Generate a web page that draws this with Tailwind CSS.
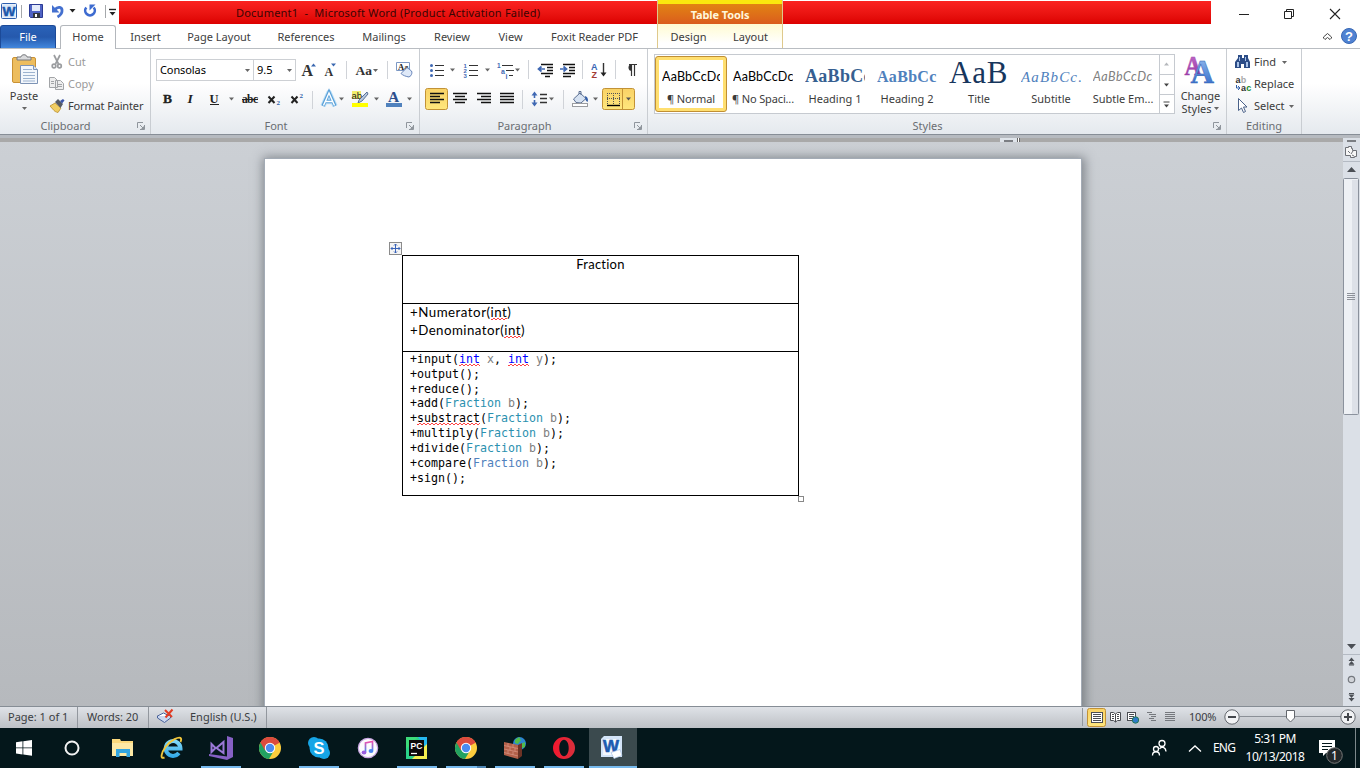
<!DOCTYPE html>
<html lang="en">
<head>
<meta charset="utf-8">
<title>Document1 - Microsoft Word</title>
<script src="https://cdn.jsdelivr.net/npm/@tailwindcss/browser@4"></script>
</head>
<body class="w-[1360px] h-[768px] overflow-hidden flex flex-col bg-white text-[11px] leading-[14px] text-[#3b3b3b] font-['Noto_Sans','Open_Sans',sans-serif] whitespace-nowrap">

<!-- shared symbols -->
<svg class="w-0 h-0 absolute">
  <defs>
    <symbol id="dd" viewBox="0 0 5 3"><path d="M0 0h5L2.500 3z" fill="#666"/></symbol>
    <symbol id="launch" viewBox="0 0 8 8"><path d="M.5 6V.5H6" fill="none" stroke="#8f959c"/><path d="M3 3l3 3M7.500 3v4.500H3" fill="none" stroke="#8f959c"/><path d="M7 4v3H4z" fill="#8f959c"/></symbol>
    <symbol id="chrome" viewBox="0 0 22 22"><circle cx="11" cy="11" r="11" fill="#fccd3d"/><path d="M11 11L1.500 5.500A11 11 0 0 1 20.500 5.700z" fill="#dc4b3e"/><path d="M1.500 5.500A11 11 0 0 0 10 22l5-8.500L11 11z" fill="#22a261"/><path d="M1.500 5.500L6 13.500 11 6H20.700A11 11 0 0 0 1.500 5.500z" fill="#dc4b3e"/><circle cx="11" cy="11" r="5.200" fill="#fff"/><circle cx="11" cy="11" r="4.200" fill="#4b8bf0"/></symbol>
    <linearGradient id="blueA" x1="0" y1="0" x2="0" y2="1"><stop offset="0" stop-color="#9cc4f4"/><stop offset="1" stop-color="#2a62c4"/></linearGradient>
    <linearGradient id="purA" x1="0" y1="0" x2="0" y2="1"><stop offset="0" stop-color="#c873cf"/><stop offset="1" stop-color="#8d2c9c"/></linearGradient>
    <linearGradient id="gold" x1="0" y1="0" x2="0" y2="1"><stop offset="0" stop-color="#f9d266"/><stop offset="1" stop-color="#ffe77d"/></linearGradient>
    <linearGradient id="sky" gradientUnits="userSpaceOnUse" x1="0" y1="738" x2="0" y2="758"><stop offset="0" stop-color="#8fe1fb"/><stop offset="1" stop-color="#2fa6e6"/></linearGradient>
    <linearGradient id="note" x1="0" y1="0" x2="0" y2="1"><stop offset="0" stop-color="#ee4fae"/><stop offset="1" stop-color="#3f8ef2"/></linearGradient>
    <linearGradient id="op" x1="0" y1="0" x2="1" y2="0"><stop offset="0" stop-color="#f4172e"/><stop offset="1" stop-color="#d8303c"/></linearGradient>
  </defs>
</svg>

<!-- title bar and tab strip -->
<header class="flex h-[48px] shrink-0">
  <div class="w-[657px] shrink-0">
    <div class="h-6 flex">
      <svg class="w-[119px] h-6" viewBox="0 0 119 24">
        <rect x="1.500" y="3.500" width="15" height="15" rx="1" fill="#e8f0fb" stroke="#2d5fae"/><rect x="3" y="5" width="12" height="12" fill="#d8e7f8"/>
        <text x="2.500" y="16" font-family="Liberation Sans" font-weight="bold" font-size="13" textLength="13" lengthAdjust="spacingAndGlyphs" fill="#1c58ac" stroke="#1c58ac" stroke-width=".5">W</text>
        <path d="M21.500 5v13" stroke="#a5a8ab"/>
        <path d="M29.500 4.500h13v13h-12l-1-1z" fill="#4f63c4" stroke="#2b3a94"/><rect x="32" y="5" width="8" height="6" fill="#e4ebfa"/><rect x="33" y="13" width="7" height="5" fill="#31363f"/><rect x="35" y="14" width="2" height="3" fill="#fff"/>
        <path d="M55 9.500c3-3.500 7.500-2.500 7 1.500 0 2.500-2 4.500-4.500 6" fill="none" stroke="#4470cf" stroke-width="2.800"/><path d="M52 5v7.500h7.500z" fill="#4470cf"/>
        <path d="M69.500 9h6l-3 3.500z" fill="#222"/>
        <path d="M86.300 7.500a4.800 4.800 0 1 0 7.400 0" fill="none" stroke="#3d6bd0" stroke-width="2.600"/><path d="M89.500 4.500h6l-6 6z" fill="#3d6bd0"/>
        <path d="M105.500 5v13" stroke="#a5a8ab"/>
        <path d="M109 9.500h7" stroke="#222" stroke-width="1.400"/><path d="M109.500 12h6l-3 3.500z" fill="#222"/>
      </svg>
      <div class="mt-px h-[23px] w-[538px] bg-linear-to-b from-[#fb2320] to-[#dc0000] pl-[117px] pt-[5px] text-[#3a0503] text-[11px] tracking-[0.22px]"><span class="whitespace-pre">Document1  -  Microsoft Word (Product Activation Failed)</span></div>
    </div>
    <nav class="flex h-6 items-end text-center leading-[22px] text-[#404040]">
      <div class="w-14 h-[23px] rounded-t-[3px] border border-b-0 border-[#1c4a98] bg-linear-to-b from-[#2a62b8] via-[#2559ad] to-[#4287dd] text-white leading-[22px]">File</div>
      <div class="ml-1 w-[56px] h-[24px] -mb-px rounded-t-[3px] border border-b-0 border-[#b3b7bc] bg-white leading-[22px] relative z-10">Home</div>
      <div class="w-[59px]">Insert</div>
      <div class="w-[88px]">Page Layout</div>
      <div class="w-[86px]">References</div>
      <div class="w-[70px]">Mailings</div>
      <div class="w-[66px]">Review</div>
      <div class="w-[51px]">View</div>
      <div class="w-[117px] tracking-[-0.05px]">Foxit Reader PDF</div>
    </nav>
  </div>
  <div class="w-[126px] shrink-0 border-x border-[#dfc98c]">
    <div class="h-1 bg-[#fbe80e]"></div>
    <div class="h-5 bg-linear-to-b from-[#e28312] to-[#da5c1c] text-center text-[11px] leading-[22px] font-bold text-[#fff6da] tracking-[-0.1px]">Table Tools</div>
    <div class="h-6 flex bg-linear-to-b from-[#fffbd0] to-white to-80% text-center leading-[26px]">
      <div class="w-[62px]">Design</div><div class="w-[64px]">Layout</div>
    </div>
  </div>
  <div class="flex-1">
    <div class="h-6 flex">
      <div class="mt-px h-[23px] w-[428px] bg-linear-to-b from-[#fb2320] to-[#dc0000]"></div>
      <svg class="w-[149px] h-6" viewBox="1211 0 149 24" fill="none" stroke="#222">
        <path d="M1239 14.500h10"/><path d="M1284.500 11.500h7v7h-7zM1286.500 11.500v-2h7v7h-2"/><path d="M1330 9l10 10M1340 9l-10 10" stroke-width="1.100"/>
      </svg>
    </div>
    <svg class="ml-auto w-[50px] h-6" viewBox="1310 24 50 24">
      <path d="M1323.500 37l4-3.500 4 3.500v1l-1.500 1.500-2.500-2-2.500 2-1.500-1.500z" fill="none" stroke="#444"/>
      <circle cx="1349" cy="36" r="7.500" fill="#4f82d2" stroke="#3767b4"/>
      <text x="1349" y="41" text-anchor="middle" font-family="Liberation Sans" font-weight="bold" font-size="13" fill="#fff">?</text>
    </svg>
  </div>
</header>

<!-- ribbon -->
<section class="h-[87px] shrink-0 flex border-t border-[#b9bdc2] border-b-[1px] border-b-[#878e97] bg-linear-to-b from-white from-40% to-[#e5e9ee]">
  <!-- clipboard -->
  <div class="w-[151px] border-r border-[#c9cdd2] flex flex-col">
    <div class="flex h-[68px]">
      <div class="w-[48px] flex flex-col items-center">
        <svg class="w-[48px] h-[40px] shrink-0" viewBox="0 49 48 40">
          <rect x="12.500" y="57.500" width="23" height="25" rx="1.500" fill="#edbd5e" stroke="#c99134"/><path d="M17 60v-3h4c0-3 6-3 6 0h4v3z" fill="#d9dadc" stroke="#77797c"/>
          <path d="M20.500 65.500h13l4 4v14h-17z" fill="#f3f7fc" stroke="#7d93b5"/><path d="M23 69.500h9M23 72.500h12M23 75.500h12M23 78.500h12M23 81h12" stroke="#9db3cf"/><path d="M33.500 65.500v4h4" fill="#dbe6f3" stroke="#7d93b5"/>
        </svg>
        <span class="text-[11px] leading-[14px]">Paste</span>
        <svg class="w-[5px] h-[3px] mt-[4px]"><use href="#dd"/></svg>
      </div>
      <div class="pt-[2px]">
        <div class="flex h-[22px] items-center text-[#9a9a9a]">
          <svg class="w-5 h-[22px]" viewBox="48 51 20 22" fill="none" stroke="#9b9da0" stroke-width="1.700"><path d="M54 55l4.500 9M60 55l-4.500 9"/><circle cx="54" cy="66" r="1.800"/><circle cx="59.500" cy="66" r="1.800"/></svg>Cut
        </div>
        <div class="flex h-[22px] items-center text-[#9a9a9a]">
          <svg class="w-5 h-[22px]" viewBox="48 73 20 22" fill="#eee" stroke="#a2a4a7"><path d="M49.500 77.500h5l3 3v7h-8zM55.500 80.500h5l3 3v6h-8z"/><path d="M51 81.500h3M51 83.500h3M57 84.500h5M57 86.500h5"/></svg>Copy
        </div>
        <div class="flex h-[22px] items-center tracking-[-0.15px]">
          <svg class="w-5 h-[22px]" viewBox="48 95 20 22"><path d="M50 106l5-3 6 5-3 4.500c-2-.5-3-1-4-2z" fill="#f0cd63" stroke="#b98d2c" stroke-width=".8"/><path d="M55 102l3-3 5 5-2.500 4z" fill="#555a66"/><path d="M60 101l3-2 1.500 1.500-2.500 3z" fill="#3b54a8"/></svg>Format Painter
        </div>
      </div>
    </div>
    <div class="flex h-[17px] items-center pr-[5px] text-[#6a6d72]"><span class="flex-1 text-center pr-[6px]">Clipboard</span><svg class="w-2 h-2"><use href="#launch"/></svg></div>
  </div>
  <!-- font -->
  <div class="w-[269px] border-r border-[#c9cdd2] flex flex-col">
    <div class="h-[68px] pl-[5px] pt-[8px]">
      <div class="flex h-[26px] items-center">
        <div class="w-[98px] h-[22px] border border-[#cdd0d4] bg-white flex items-center justify-between px-[3px] text-black tracking-[-0.1px]"><span>Consolas</span><svg class="w-[5px] h-[3px]"><use href="#dd"/></svg></div>
        <div class="w-[43px] h-[22px] -ml-px border border-[#cdd0d4] bg-white flex items-center justify-between px-[3px] text-black"><span>9.5</span><svg class="w-[5px] h-[3px]"><use href="#dd"/></svg></div>
        <svg class="w-[122px] h-[26px]" viewBox="296 57 122 26" font-family="Liberation Serif" font-weight="bold" fill="#333">
          <text x="301.500" y="76" font-size="16">A</text><path d="M311 66.500l2.500-3 2.500 3z" fill="#3a68b0"/>
          <text x="324.500" y="76" font-size="12">A</text><path d="M331 63.500h5l-2.500 3z" fill="#3a68b0"/>
          <path d="M346.500 61v18M387.500 61v18" stroke="#d0d3d8"/>
          <text x="355.500" y="75" font-size="13.500">Aa</text><path d="M373 69h5l-2.500 3z" fill="#666"/>
          <path d="M396.500 62.500h13v8h-13z" fill="#fff" stroke="#7c98c4"/><text x="398" y="70" font-size="8.500" fill="#222">Aa</text>
          <path d="M401 73.500l6-6 4.500 3.500c.8 1.500.3 3-.5 4.500l-2 1.500c-3-.5-6-1.500-8-3.500z" fill="#dfe9f8" stroke="#6785ba"/>
        </svg>
      </div>
      <svg class="w-[263px] h-[30px]" viewBox="156 83 263 30" font-family="Liberation Serif" fill="#222">
        <text x="163" y="103" font-weight="bold" font-size="13.500" stroke="#222" stroke-width=".3">B</text>
        <text x="187.500" y="103" font-style="italic" font-weight="bold" font-size="13.500">I</text>
        <text x="209.500" y="103" font-weight="bold" font-size="12.500">U</text><path d="M210 104.500h9" stroke="#222"/>
        <path d="M229 97.500h5l-2.500 3z" fill="#666"/>
        <text x="242" y="103" font-weight="bold" font-size="11.500" textLength="16">abc</text><path d="M242 99.500h16" stroke="#222"/>
        <path d="M268.500 96.500l6 6.500M274.500 96.500l-6 6.500" stroke="#222" stroke-width="2"/><text x="276.500" y="105" font-size="7" font-weight="bold" fill="#2f5ea8">2</text>
        <path d="M291.500 96.500l6 6.500M297.500 96.500l-6 6.500" stroke="#222" stroke-width="2"/><text x="299.500" y="98" font-size="7" font-weight="bold" fill="#2f5ea8">2</text>
        <path d="M312.500 91v18" stroke="#d0d3d8"/>
        <path d="M323 106l6-13.500 6 13.500M325.500 101.500h7" fill="none" stroke="#bfe1f8" stroke-width="5.500" stroke-linejoin="round"/><path d="M323 106l6-13.500 6 13.500M325.500 101.500h7" fill="none" stroke="#5aa0d8" stroke-width="3.400"/><path d="M323.500 105.500l5.500-12.500 5.500 12.500M325.500 101.500h7" fill="none" stroke="#fff" stroke-width="1.400"/>
        <path d="M339 97.500h5l-2.500 3zM374 97.500h5l-2.500 3zM407 97.500h5l-2.500 3z" fill="#666"/>
        <path d="M352 91h9v8h-9z" fill="#f3ee6b"/><text x="351.500" y="98.500" font-family="Liberation Sans" font-size="9.500">ab</text><path d="M367 92l-8 8-1 3 4-2 6-7z" fill="#b8c7dd" stroke="#4a658f" stroke-width=".9"/><path d="M352 103h16v4h-16z" fill="#ff0"/>
        <text x="388" y="101.500" font-weight="bold" font-size="15.500" fill="#2c4e8c">A</text><path d="M386 103h16v4h-16z" fill="#4f81bd"/>
      </svg>
    </div>
    <div class="flex h-[17px] items-center pr-[5px] text-[#6a6d72]"><span class="flex-1 text-center pr-[5px]">Font</span><svg class="w-2 h-2"><use href="#launch"/></svg></div>
  </div>
  <!-- paragraph -->
  <div class="w-[228px] border-r border-[#c9cdd2] flex flex-col">
    <svg class="w-[227px] h-[68px]" viewBox="420 49 227 68" fill="none" stroke="#333" font-family="Liberation Sans">
      <path d="M435 65.500h9M435 70.500h9M435 75.500h9M469 65.500h9M469 70.500h9M469 75.500h9" stroke-width="1.200"/>
      <g fill="#3f68b3" stroke="none"><circle cx="431.500" cy="65.500" r="1.500"/><circle cx="431.500" cy="70.500" r="1.500"/><circle cx="431.500" cy="75.500" r="1.500"/>
        <text x="463.500" y="67.500" font-size="6" font-weight="bold">1</text><text x="463.500" y="72.800" font-size="6" font-weight="bold">2</text><text x="463.500" y="78" font-size="6" font-weight="bold">3</text>
        <text x="497" y="68" font-size="6.500" font-weight="bold">1</text><text x="501" y="73.500" font-size="7" font-weight="bold">a</text><text x="505.500" y="78.500" font-size="7" font-weight="bold">i</text></g>
      <path d="M502 65.500h11M506 70.500h8M509 75.500h4" stroke-width="1.200"/>
      <g fill="#666" stroke="none"><path d="M450 68.500h5l-2.500 3zM485 68.500h5l-2.500 3zM515 68.500h5l-2.500 3zM549 97.500h5l-2.500 3zM593 97.500h5l-2.500 3z"/></g>
      <path d="M528.500 60v19M582.500 60v19M615.500 60v19M522.500 90v19M563.500 90v19" stroke="#d0d3d8"/>
      <path d="M541 64.500h12M547 67.500h6M547 70.500h6M541 73.500h12M545 76.500h5M563 64.500h12M569 67.500h6M569 70.500h6M563 73.500h12M563 76.500h8" stroke="#111" stroke-width="1.300"/>
      <path d="M545 69h-6m2.500-2.500l-3 2.500 3 2.500M560 69h6m-2.500-2.500l3 2.500-3 2.500" stroke="#3f68b3" stroke-width="1.700"/>
      <g stroke="none" font-weight="bold"><text x="591" y="69.500" font-size="9" fill="#3866b4">A</text><text x="591.500" y="78" font-size="9" fill="#a33b34">Z</text></g>
      <path d="M603.500 63v11" stroke-width="1.400"/><path d="M600.500 72.500h6l-3 4z" fill="#222" stroke="none"/>
      <path d="M631.500 64v12M634.500 64v12M629 64.500h8" stroke-width="1.200"/><path d="M632 64a3.500 3.500 0 0 0 0 7z" fill="#333" stroke="none"/>
      <rect x="425.500" y="88.500" width="22" height="21" rx="2" fill="url(#gold)" stroke="#c29236"/>
      <path d="M430 93.500h14M430 96.500h10M430 99.500h14M430 102.500h10M453 93.500h14M455 96.500h10M453 99.500h14M455 102.500h10M477 93.500h14M481 96.500h10M477 99.500h14M481 102.500h10M500 93.500h14M500 96.500h14M500 99.500h14M500 102.500h14" stroke="#111" stroke-width="1.300"/>
      <path d="M534.500 94v4M534.500 100v5" stroke="#3f68b3" stroke-width="1.600"/><path d="M531.500 95.500h6l-3-4zM531.500 102.500h6l-3 4z" fill="#3f68b3" stroke="none"/>
      <path d="M540 94.500h7M540 98.500h7M540 102.500h7" stroke-width="1.300"/>
      <path d="M573.500 99l6.500-6 6 5.500-5 4.500-5-.5z" fill="#d6e2f2" stroke="#5b6f91"/><path d="M579 94v-2.500h2V95" stroke="#5b6f91"/><path d="M585 96c3 1 3.500 4 2.500 6-2-1-2.500-3-2.500-6z" fill="#355fa8" stroke="none"/><rect x="572.500" y="103.500" width="15" height="3" fill="#fff" stroke="#9a9ca0"/>
      <rect x="602.500" y="88.500" width="32" height="21" rx="2" fill="url(#gold)" stroke="#c29236"/><path d="M622.500 89v20" stroke="#c29236"/>
      <path d="M607.500 93v11M613.500 93v11M619.500 93v11M607 93.500h13M607 98.500h13" stroke="#555" stroke-dasharray="1 1"/><path d="M607 105.500h13" stroke="#000" stroke-width="1.400"/><path d="M626 97.500h5l-2.500 3z" fill="#555" stroke="none"/>
    </svg>
    <div class="flex h-[17px] items-center pr-[5px] text-[#6a6d72]"><span class="flex-1 text-center pr-[5px]">Paragraph</span><svg class="w-2 h-2"><use href="#launch"/></svg></div>
  </div>
  <!-- styles -->
  <div class="w-[579px] border-r border-[#c9cdd2] flex flex-col">
    <div class="flex h-[68px] pl-[6px] pt-[5px]">
      <div class="h-[60px] w-[521px] border border-[#c6cad0] bg-white flex text-center">
        <div class="w-[72px] h-[56px] rounded-[3px] border border-[#c08f34] bg-[#ffdf70] p-[3px] mt-px"><div class="h-full bg-white px-[3px]">
          <div class="h-[26px] leading-[34px] overflow-hidden text-left text-black font-['Lato'] text-[12.500px] tracking-[0.2px]">AaBbCcDc</div><div class="mt-[6px] -mx-1 tracking-[-0.1px]">¶ Normal</div></div></div>
        <div class="w-[72px] px-[6px] pt-[5px]"><div class="h-[26px] leading-[34px] overflow-hidden text-left text-black font-['Lato'] text-[12.500px] tracking-[0.2px]">AaBbCcDc</div><div class="mt-[6px] -mx-2 tracking-[-0.15px]">¶ No Spaci...</div></div>
        <div class="w-[72px] px-[6px] pt-[5px]"><div class="h-[26px] leading-[33px] overflow-hidden text-left text-[#365f91] font-['Liberation_Serif'] font-bold text-[18px] tracking-[0.3px]">AaBbCc</div><div class="mt-[6px] -mx-2">Heading 1</div></div>
        <div class="w-[72px] px-[6px] pt-[5px]"><div class="h-[26px] leading-[33px] overflow-hidden text-left text-[#4f81bd] font-['Liberation_Serif'] font-bold text-[16px] tracking-[0.3px]">AaBbCc</div><div class="mt-[6px] -mx-2">Heading 2</div></div>
        <div class="w-[72px] px-[6px] pt-[7px]"><div class="h-[24px] leading-[22px] overflow-hidden text-left text-[#17365d] font-['Liberation_Serif'] text-[31px] tracking-[0.8px]">AaB</div><div class="mt-[6px]">Title</div></div>
        <div class="w-[72px] px-[6px] pt-[5px]"><div class="h-[26px] leading-[34px] overflow-hidden text-left text-[#4f81bd] italic font-['Liberation_Serif'] text-[15px] tracking-[1.200px]">AaBbCc.</div><div class="mt-[6px]">Subtitle</div></div>
        <div class="w-[72px] px-[6px] pt-[5px]"><div class="h-[26px] leading-[34px] overflow-hidden text-left text-[#808080] italic font-['Lato'] text-[12.500px] tracking-[0.5px]">AaBbCcDc</div><div class="mt-[6px] -mx-2">Subtle Em...</div></div>
        <svg class="w-[15px] h-[58px]" viewBox="1160 55 15 58"><path d="M1160.500 55v58M1160 74.500h15M1160 94.500h15" stroke="#c6cad0" fill="none"/><path d="M1165 65.500h5l-2.500-3z" fill="#b5b8bc"/><path d="M1165 83.500h5l-2.500 3zM1165 104.500h5l-2.500 3z" fill="#444"/><path d="M1164.500 102h6" stroke="#444"/></svg>
      </div>
      <div class="w-[51px] flex flex-col items-center leading-[13px]">
        <svg class="w-[51px] h-[35px] shrink-0" viewBox="1175 54 51 35" font-family="Liberation Serif" font-weight="bold"><text x="1184.500" y="74.500" font-size="27" fill="url(#purA)" stroke="#a44bb0" stroke-width=".5" textLength="17" lengthAdjust="spacingAndGlyphs">A</text><text x="1190.500" y="83" font-size="34" fill="url(#blueA)" stroke="#2c5cb0" stroke-width=".5" textLength="23.500" lengthAdjust="spacingAndGlyphs">A</text></svg>
        <span>Change</span>
        <span class="flex items-center gap-[3px]">Styles <svg class="w-[5px] h-[3px]"><use href="#dd"/></svg></span>
      </div>
    </div>
    <div class="flex h-[17px] items-center pr-[5px] text-[#6a6d72]"><span class="flex-1 text-center pr-[6px]">Styles</span><svg class="w-2 h-2"><use href="#launch"/></svg></div>
  </div>
  <!-- editing -->
  <div class="w-[75px] border-r border-[#c9cdd2] flex flex-col">
    <div class="h-[68px] pt-[2px] pl-[3px]">
      <div class="flex h-[22px] items-center"><svg class="w-[24px] h-[22px]" viewBox="1230 51 24 22"><path d="M1238 55h4v3h2v-3h4v3l2 4v6h-6v-4h-3v4h-6v-6l3-4z" fill="#2b4c86"/><path d="M1237 62h2v5h-2zM1246 62h2v5h-2zM1239 57h1v4h-1zM1245 57h1v4h-1z" fill="#a8c2e8"/></svg>Find<svg class="w-[5px] h-[3px] ml-[6px]"><use href="#dd"/></svg></div>
      <div class="flex h-[22px] items-center"><svg class="w-[24px] h-[22px]" viewBox="1230 73 24 22" font-family="Liberation Sans" font-weight="bold" font-size="9"><text x="1235.500" y="83" fill="#333">a</text><text x="1240.800" y="83" fill="#aaa">b</text><text x="1241" y="91" fill="#333">a</text><text x="1246.300" y="91" fill="#178a2c">c</text><path d="M1236.500 85v3h3M1238 86l2 2-2 2" fill="none" stroke="#2f5ea8"/></svg>Replace</div>
      <div class="flex h-[22px] items-center"><svg class="w-[24px] h-[22px]" viewBox="1230 95 24 22"><path d="M1238.500 98.500v12l3-2.500 2 4.500 2-1-2-4.500h3.500z" fill="#fff" stroke="#4a6189"/></svg>Select<svg class="w-[5px] h-[3px] ml-[4px]"><use href="#dd"/></svg></div>
    </div>
    <div class="h-[17px] leading-[17px] text-center text-[#6a6d72]">Editing</div>
  </div>
</section>

<!-- document area -->
<main class="h-[571px] shrink-0 flex flex-col bg-linear-to-b from-[#ccd0d5] to-[#b6b9bd]">
  <div class="h-[3px] bg-[#b6bac0] shrink-0"></div>
  <div class="flex h-[568px]">
    <div class="w-[1343px] flex flex-col">
      <div class="flex h-1 bg-[#a9a9a9] shrink-0">
        <div class="ml-[1000px] w-[17px] bg-[#dfe4ea] pl-1 pt-[2px]"><div class="w-[9px] h-[2px] bg-[#7b7e83]"></div></div>
        <div class="w-[3px] border-x border-[#666] bg-white"></div>
      </div>
      <div class="flex-1 overflow-hidden flex flex-col">
      <div class="mt-[16px] ml-[264px] w-[818px] h-[600px] shrink-0 bg-white border border-[#a3abb5] shadow-[1px_1px_10px_2px_rgba(70,75,82,0.55)] pl-[124px] pt-[83px]">
        <svg class="w-[13px] h-[13px]" viewBox="0 0 13 13"><rect x=".5" y=".5" width="12" height="12" fill="#f4f4f4" stroke="#8b8b8b"/><path d="M6.500 2v9M2 6.500h9M5 3.500l1.500-1.500L8 3.500M5 9.500l1.500 1.500L8 9.500M3.500 5L2 6.500 3.500 8M9.500 5L11 6.500 9.500 8" stroke="#3862b8" fill="none"/></svg>
        <div class="ml-[13px] w-[397px] h-[241px] flex flex-col border border-black text-black">
          <div class="h-12 shrink-0 border-b border-black text-center font-['Lato'] text-[13px] leading-[16px] tracking-[0.25px]">Fraction</div>
          <div class="h-12 shrink-0 border-b border-black px-[7px] font-['Lato'] text-[13.300px] leading-[18px] tracking-[0.5px]">
            <div class="leading-[16px] mb-px">+Numerator(<span class="bg-[linear-gradient(90deg,#f44_50%,transparent_50%),linear-gradient(90deg,transparent_50%,#f44_50%)] bg-[length:4px_1px] bg-[position:0_100%,0_calc(100%-1px)] bg-repeat-x">int</span>)</div>
            <div class="tracking-[0.45px]">+Denominator(<span class="bg-[linear-gradient(90deg,#f44_50%,transparent_50%),linear-gradient(90deg,transparent_50%,#f44_50%)] bg-[length:4px_1px] bg-[position:0_100%,0_calc(100%-1px)] bg-repeat-x">int</span>)</div>
          </div>
          <div class="-mt-[0.200px] px-[7px] font-['DejaVu_Sans_Mono'] text-[11.630px] leading-[14.880px]">
            <div>+input(<span class="text-[#00f] bg-[linear-gradient(90deg,#f44_50%,transparent_50%),linear-gradient(90deg,transparent_50%,#f44_50%)] bg-[length:4px_1px] bg-[position:0_100%,0_calc(100%-1px)] bg-repeat-x">int</span> <span class="text-[#808080]">x</span>, <span class="text-[#00f] bg-[linear-gradient(90deg,#f44_50%,transparent_50%),linear-gradient(90deg,transparent_50%,#f44_50%)] bg-[length:4px_1px] bg-[position:0_100%,0_calc(100%-1px)] bg-repeat-x">int</span> <span class="text-[#808080]">y</span>);</div>
            <div>+output();</div>
            <div>+reduce();</div>
            <div>+add(<span class="text-[#2b91af]">Fraction</span> <span class="text-[#808080]">b</span>);</div>
            <div>+<span class="bg-[linear-gradient(90deg,#f44_50%,transparent_50%),linear-gradient(90deg,transparent_50%,#f44_50%)] bg-[length:4px_1px] bg-[position:0_100%,0_calc(100%-1px)] bg-repeat-x">substract</span>(<span class="text-[#2b91af]">Fraction</span> <span class="text-[#808080]">b</span>);</div>
            <div>+multiply(<span class="text-[#2b91af]">Fraction</span> <span class="text-[#808080]">b</span>);</div>
            <div>+divide(<span class="text-[#2b91af]">Fraction</span> <span class="text-[#808080]">b</span>);</div>
            <div>+compare(<span class="text-[#4f81bd]">Fraction</span> <span class="text-[#808080]">b</span>);</div>
            <div>+sign();</div>
          </div>
        </div>
        <div class="ml-[409px] w-[6px] h-[6px] border border-[#888] bg-white"></div>
      </div>
      </div>
    </div>
    <!-- scroll bar -->
    <svg class="w-[17px] h-[568px]" viewBox="1343 138 17 568">
      <rect x="1343" y="138" width="17" height="568" fill="#dbe0e7"/>
      <path d="M1347 140h9v2h-9z" fill="#7b7e83"/>
      <path d="M1345.500 147.500h3v-1h3v2h1v2h4v6h-2v1h-4v-2h-5z" fill="#f6f6f6" stroke="#6e7177"/><path d="M1348 151l2 2m1 1l2-3m1 5l-2-1" stroke="#6e7177"/>
      <path d="M1343 161.500h17M1343 654.500h17" stroke="#b4bac3"/>
      <path d="M1347 172h9l-4.500-5zM1347 644h9l-4.500 5z" fill="#4b4f55"/>
      <rect x="1343.500" y="178.500" width="15" height="236" rx="1" fill="#eef1f5" stroke="#8b929d"/><path d="M1352 180h6v234h-6z" fill="#dde1e8"/>
      <path d="M1347 293.500h8M1347 295.500h8M1347 297.500h8M1347 299.500h8" stroke="#8d9199"/>
      <g fill="#4b4f55"><path d="M1348.500 662h6l-3-3.500zM1348.500 665.500h6l-3-3.500zM1348.500 695.500h6l-3 3.500zM1348.500 699h6l-3 3.500z" transform="translate(0 -1)"/><path d="M1349 664.500h5v1h-5zM1349 693h5v1h-5z"/></g>
      <circle cx="1351.500" cy="679.500" r="3.200" fill="#d0d3d8" stroke="#75797f" stroke-width="1.200"/>
    </svg>
  </div>
</main>

<!-- status bar -->
<footer class="h-[22px] shrink-0 flex items-center border-t border-[#868d95] bg-linear-to-b from-[#dfe2e7] to-[#bdc1c6] text-[11px] text-[#3a3d42]">
  <div class="w-[78px] pl-2 h-full leading-[20px] border-r border-[#92979e]">Page: 1 of 1</div>
  <div class="w-[71px] pl-[9px] h-full leading-[20px] border-r border-[#92979e]">Words: 20</div>
  <svg class="w-[41px] h-[21px]" viewBox="149 707 41 21"><path d="M157.500 716l6-3 7 3.500-6 4z" fill="#fff" stroke="#47619a"/><path d="M157.500 716v2l7 4.500 6-4.500v-2" fill="#cbd7ee" stroke="#47619a"/><path d="M165 710l7 7M172.500 709.500l-7 8" stroke="#e23b22" stroke-width="2"/></svg>
  <div class="w-[77px] h-full leading-[20px] border-r border-[#92979e]">English (U.S.)</div>
  <svg class="ml-auto w-[100px] h-[21px]" viewBox="1082 707 100 21" fill="none" stroke="#4a4d52">
    <path d="M1082.500 708v18" stroke="#92979e"/>
    <rect x="1087.500" y="708.500" width="18" height="18" rx="2" fill="url(#gold)" stroke="#c29236"/><rect x="1091.500" y="712.500" width="11" height="10" fill="#fff"/><path d="M1093 714.500h8M1093 716.500h8M1093 718.500h8M1093 720.500h8"/>
    <path d="M1110.500 712.500h3l2 1.500 2-1.500h3v8h-3l-2 1.500-2-1.500h-3zM1115.500 714v8" fill="#fff"/><path d="M1112 714.500h2M1112 716.500h2M1112 718.500h2M1117 714.500h2M1117 716.500h2M1117 718.500h2"/>
    <rect x="1127.500" y="712.500" width="8" height="8" fill="#fff"/><path d="M1129 714.500h5M1129 716.500h5M1129 718.500h5"/><circle cx="1135.500" cy="720" r="3.200" fill="#2f7bc8" stroke="#275"/>
    <path d="M1147 712.500h5M1149 714.500h7M1151 716.500h5M1149 718.500h5M1151 720.500h5M1165 712.500h10M1165 714.500h10M1165 716.500h10M1165 718.500h10M1165 720.500h10" stroke="#75787d"/>
  </svg>
  <div class="w-[42px] pl-[7px] h-full leading-[20px] tracking-[-0.2px]">100%</div>
  <svg class="w-[136px] h-[21px]" viewBox="1224 707 136 21">
    <path d="M1240 716.500h101" stroke="#8b9097"/><g fill="#f1f2f4" stroke="#63676d"><circle cx="1232" cy="717" r="7.200"/><circle cx="1348" cy="717" r="7.200"/><path d="M1286.500 710.500h8v7.500l-4 4-4-4z" fill="#fff"/></g><path d="M1228 717h8M1344 717h8M1348 713v8" stroke="#44474c" stroke-width="2"/>
  </svg>
</footer>

<!-- taskbar -->
<div class="h-10 shrink-0 flex bg-[#04171b]">
  <svg class="w-[49px] h-10" viewBox="0 728 49 40" fill="#fff"><path d="M16 742.300l6.500-1v6.200H16zM23.300 741.200l8.700-1.200v7.500h-8.700zM16 748.300h6.500v6.200l-6.500-1zM23.300 748.300H32v7.500l-8.700-1.200z"/></svg>
  <svg class="w-[49px] h-10" viewBox="49 728 49 40"><circle cx="72" cy="748" r="6.500" fill="none" stroke="#f2f2f2" stroke-width="2"/></svg>
  <svg class="w-[49px] h-10" viewBox="98 728 49 40"><path d="M112 739h8l1 2h12v15h-21z" fill="#fbd97c"/><path d="M112 743h21v13h-21z" fill="#fde9a5"/><path d="M116 757v-8h14v8h-3.500v-4h-7v4z" fill="#33a5e0"/></svg>
  <svg class="w-[49px] h-10" viewBox="147 728 49 40"><path d="M165.500 748.500h15a7.400 7.400 0 1 0-1.600 4.600" fill="none" stroke="url(#sky)" stroke-width="4"/><path d="M164.500 757.500c-5 2-3-5 1-10.500 5-7 14-11 15.500-8.500.5 1 .2 2-.5 3.500" fill="none" stroke="#f2c73c" stroke-width="1.900"/></svg>
  <svg class="w-[49px] h-10" viewBox="196 728 49 40"><path d="M201 766h40v2h-40z" fill="#76b9ed"/><path d="M227 736l6 2v19l-6 3-18-4v-2l18 2.500z" fill="#8661c5"/><path d="M211.500 744v8l4-4zM223.500 742v11l-7-5z" fill="none" stroke="#9b79d8" stroke-width="2"/></svg>
  <svg class="w-[49px] h-10" viewBox="245 728 49 40"><use href="#chrome" x="259" y="737" width="22" height="22"/></svg>
  <svg class="w-[49px] h-10" viewBox="294 728 49 40"><path d="M299 766h40v2h-40z" fill="#76b9ed"/><g fill="#16a5e6"><circle cx="319" cy="748" r="9.500"/><circle cx="314" cy="743" r="6"/><circle cx="324" cy="753" r="6"/></g><text x="319" y="754" text-anchor="middle" font-family="Liberation Sans" font-weight="bold" font-size="16.500" fill="#fff">S</text></svg>
  <svg class="w-[49px] h-10" viewBox="343 728 49 40"><circle cx="368" cy="748" r="9.700" fill="#fbfbfd" stroke="#c9a6e2" stroke-width="1.200"/><path d="M365.500 752v-9l7-1.500v9" fill="none" stroke="url(#note)" stroke-width="1.700"/><ellipse cx="364" cy="752.500" rx="2.400" ry="1.900" fill="#9a5ee0"/><ellipse cx="371" cy="751" rx="2.400" ry="1.900" fill="#4a84ee"/></svg>
  <svg class="w-[49px] h-10" viewBox="392 728 49 40"><path d="M397 766h40v2h-40z" fill="#76b9ed"/><path d="M406 737h21v22h-21z" fill="#2bd38a"/><path d="M406 737h12l-12 12z" fill="#3ddc7a"/><path d="M418 737h9v12z" fill="#25b8f0"/><path d="M427 744v15h-15z" fill="#f3ee4f"/><path d="M409 740h15v16h-15z" fill="#0a0a0a"/><text x="410.500" y="749" font-family="Liberation Sans" font-weight="bold" font-size="8.500" fill="#fff" textLength="12">PC</text><path d="M411 753.500h6" stroke="#fff" stroke-width="1.300"/></svg>
  <svg class="w-[49px] h-10" viewBox="441 728 49 40"><path d="M446 766h31v2h-31z" fill="#76b9ed"/><path d="M477 766h9v2h-9z" fill="#4e86b4"/><use href="#chrome" x="455" y="737" width="22" height="22"/></svg>
  <svg class="w-[49px] h-10" viewBox="490 728 49 40"><path d="M495 766h40v2h-40z" fill="#76b9ed"/><circle cx="519.500" cy="743.500" r="6.500" fill="#2c86d2"/><path d="M515 740l4-3 2 3-3 4-3-1zM521 744l4-2v5l-3 1z" fill="#52bd4a"/><path d="M504 742l14 3v14l-14-4z" fill="#b4614a"/><path d="M518 745l4-2v13l-4 3z" fill="#6e3325"/><path d="M504 745.500l14 3M504 749l14 3M504 752.500l14 3.500M508 743v3.500M513 744v3.500M510 747v3.500M515 748v3.500M508 750v3.500M513 751.500v3.500" stroke="#e0a090" stroke-width=".6"/></svg>
  <svg class="w-[50px] h-10" viewBox="539 728 50 40"><path d="M544 766h40v2h-40z" fill="#76b9ed"/><path d="M564 737a11 11 0 1 0 0 22 11 11 0 1 0 0-22zm0 2.800c2.800 0 4.700 3.600 4.700 8.200s-1.900 8.200-4.700 8.200-4.700-3.600-4.700-8.200 1.900-8.200 4.700-8.200z" fill="url(#op)" fill-rule="evenodd"/></svg>
  <svg class="w-12 h-10" viewBox="589 728 48 40"><path d="M589 728h48v40h-48z" fill="#3b4a4e"/><path d="M589 766h48v2h-48z" fill="#76b9ed"/><path d="M604 736h18v21h-21v-18z" fill="#d3e4f8"/><path d="M604 739h16v16h-17z" fill="#f4f8fd"/><text x="603" y="752" font-family="Liberation Sans" font-weight="bold" font-size="16.500" fill="#1c5bb0" stroke="#1c5bb0" stroke-width=".6" textLength="16" lengthAdjust="spacingAndGlyphs">W</text><path d="M611 752.500l9-3 2 6-8 3z" fill="#fff" stroke="#a9c2e4" stroke-width=".7"/></svg>
  <div class="ml-auto flex text-white">
    <svg class="w-[69px] h-10" viewBox="1143 728 69 40" fill="none" stroke="#fff" stroke-width="1.300"><circle cx="1162" cy="743.500" r="3"/><circle cx="1156" cy="749" r="2.500"/><path d="M1152.500 755.500c0-5 7-5 7 0M1159.500 749c2-3 6-2 6.500 2.500"/><path d="M1189 751.500l6-5.500 6 5.500"/></svg>
    <div class="w-[30px] pl-px leading-[40px] text-[12px] tracking-[-0.8px]">ENG</div>
    <div class="w-[66px] text-center text-[12px] leading-[18px] pt-[2px] tracking-[-0.5px]"><div>5:31 PM</div><div>10/13/2018</div></div>
    <svg class="w-[52px] h-10" viewBox="1308 728 52 40"><path d="M1319 740h16v13h-9l-3 3v-3h-4z" fill="#fff"/><path d="M1322 743.500h10M1322 746.500h10M1322 749.500h6" stroke="#04171b"/><circle cx="1334.500" cy="755.500" r="7.800" fill="#23282b" stroke="#777"/><text x="1334.500" y="759.500" text-anchor="middle" font-size="12" fill="#fff" font-family="Noto Sans">1</text><path d="M1355.500 728v40" stroke="#7d888b"/></svg>
  </div>
</div>
</body>
</html>
